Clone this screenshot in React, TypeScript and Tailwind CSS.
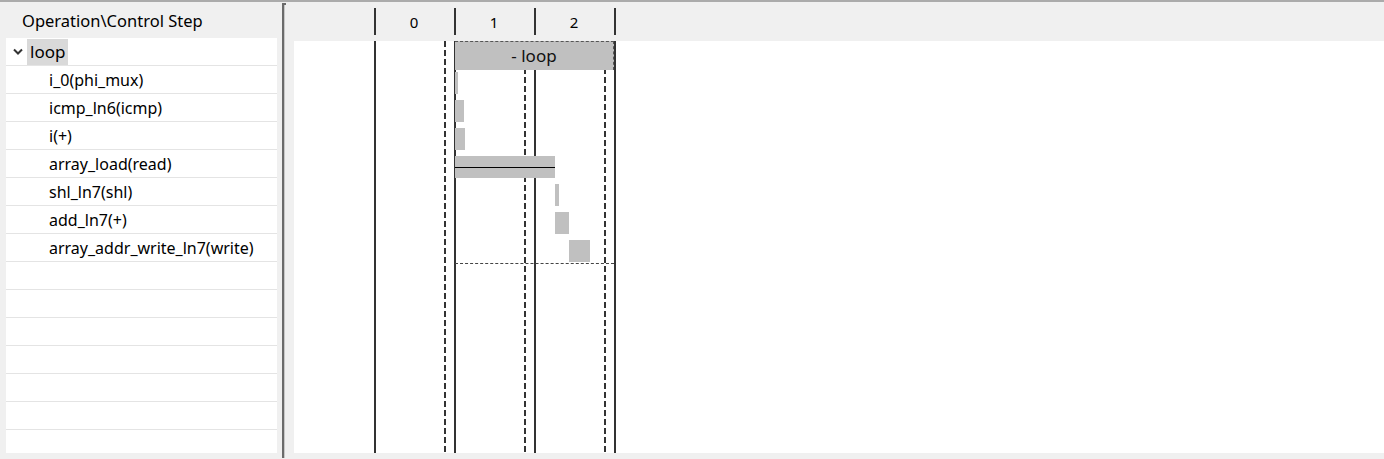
const ops = [
  'i_0(phi_mux)',
  'icmp_ln6(icmp)',
  'i(+)',
  'array_load(read)',
  'shl_ln7(shl)',
  'add_ln7(+)',
  'array_addr_write_ln7(write)',
];

// bars in chart coordinates (x from the white area's left edge)
const bars = [
  { left: 161, width: 3 },
  { left: 161, width: 9 },
  { left: 161, width: 10 },
  { left: 161, width: 100, line: true },
  { left: 261, width: 4 },
  { left: 261, width: 14 },
  { left: 275, width: 21 },
];

const font = { fontFamily: '"Noto Sans", "Open Sans", sans-serif' };

function Chevron() {
  return (
    <svg width="10" height="7" viewBox="0 0 10 7" className="shrink-0">
      <polyline points="1,1.5 5,5.5 9,1.5" fill="none" stroke="#333" strokeWidth="2" />
    </svg>
  );
}

function OperationList() {
  const empty = Array.from({ length: 8 });
  return (
    <div className="w-[282px] flex flex-col">
      <div className="h-[36px] flex items-center pl-[22px] pt-[2px] text-[16.5px] text-black">
        Operation\Control Step
      </div>
      <div className="ml-[6px] w-[271px] h-[415px] bg-white overflow-hidden text-[16px] text-black">
        <div className="h-[28px] border-b border-[#e4e4e4] flex items-center pl-[7px]">
          <Chevron />
          <span className="ml-[4px] h-[26px] px-[3px] flex items-center bg-[#d9d9d9] text-[17px]">loop</span>
        </div>
        {ops.map((op) => (
          <div key={op} className="h-[28px] border-b border-[#e4e4e4] flex items-center pl-[43px]">
            {op}
          </div>
        ))}
        {empty.map((_, i) => (
          <div key={i} className="h-[28px] border-b border-[#e4e4e4]" />
        ))}
      </div>
    </div>
  );
}

function Splitter() {
  return (
    <div className="w-[5px] pt-[1px] pb-[1px] flex">
      <div className="w-[4px] h-[455px] border-l-2 border-t-2 border-[#6b6b6b] shadow-[inset_1px_0_0_#c8c8c8]" />
    </div>
  );
}

function Schedule() {
  return (
    <div className="flex-1 flex flex-col pl-[7px]">
      {/* step header */}
      <div className="h-[39px] flex items-start text-[15px] text-black">
        <div className="w-[80px]" />
        {['0', '1', '2'].map((s) => (
          <div key={s} className="w-[80px] h-[27px] mt-[6px] border-l-2 border-[#333] flex items-center justify-center pt-[2px] pr-[2px]">
            {s}
          </div>
        ))}
        <div className="h-[27px] mt-[6px] border-l-2 border-[#333]" />
      </div>

      {/* chart body */}
      <div className="relative h-[412px] bg-white">
        <div className="flex h-full">
          <div className="w-[80px]" />
          {[0, 1, 2].map((s) => (
            <div key={s} className="w-[80px] h-full border-l-2 border-[#333] flex">
              <div className="ml-[68px] w-[2px] h-full bg-[repeating-linear-gradient(to_bottom,#333_0_6px,transparent_6px_9px)]" />
            </div>
          ))}
          <div className="h-full border-l-2 border-[#333]" />
        </div>

        <div className="absolute inset-0">
          <div className="ml-[161px] w-[159px] h-[29px] bg-[#c0c0c0] border-t border-r border-dashed border-[#555] flex items-center justify-center text-[17px] text-[#111]">
            - loop
          </div>
          <div className="mt-[2px] flex flex-col gap-[6px]">
            {bars.map((b, i) => (
              <div key={i} className="h-[22px] bg-[#c0c0c0]" style={{ marginLeft: b.left, width: b.width }}>
                {b.line && <div className="mt-[11px] h-px bg-black" />}
              </div>
            ))}
          </div>
          <div className="mt-[1px] ml-[161px] w-[159px] h-0 border-t border-dashed border-[#444]" />
        </div>
      </div>
    </div>
  );
}

export default function App() {
  return (
    <div className="w-[1384px] h-[459px] bg-[#f0f0f0] border-t-2 border-[#ababab] flex overflow-hidden" style={font}>
      <OperationList />
      <Splitter />
      <Schedule />
    </div>
  );
}
